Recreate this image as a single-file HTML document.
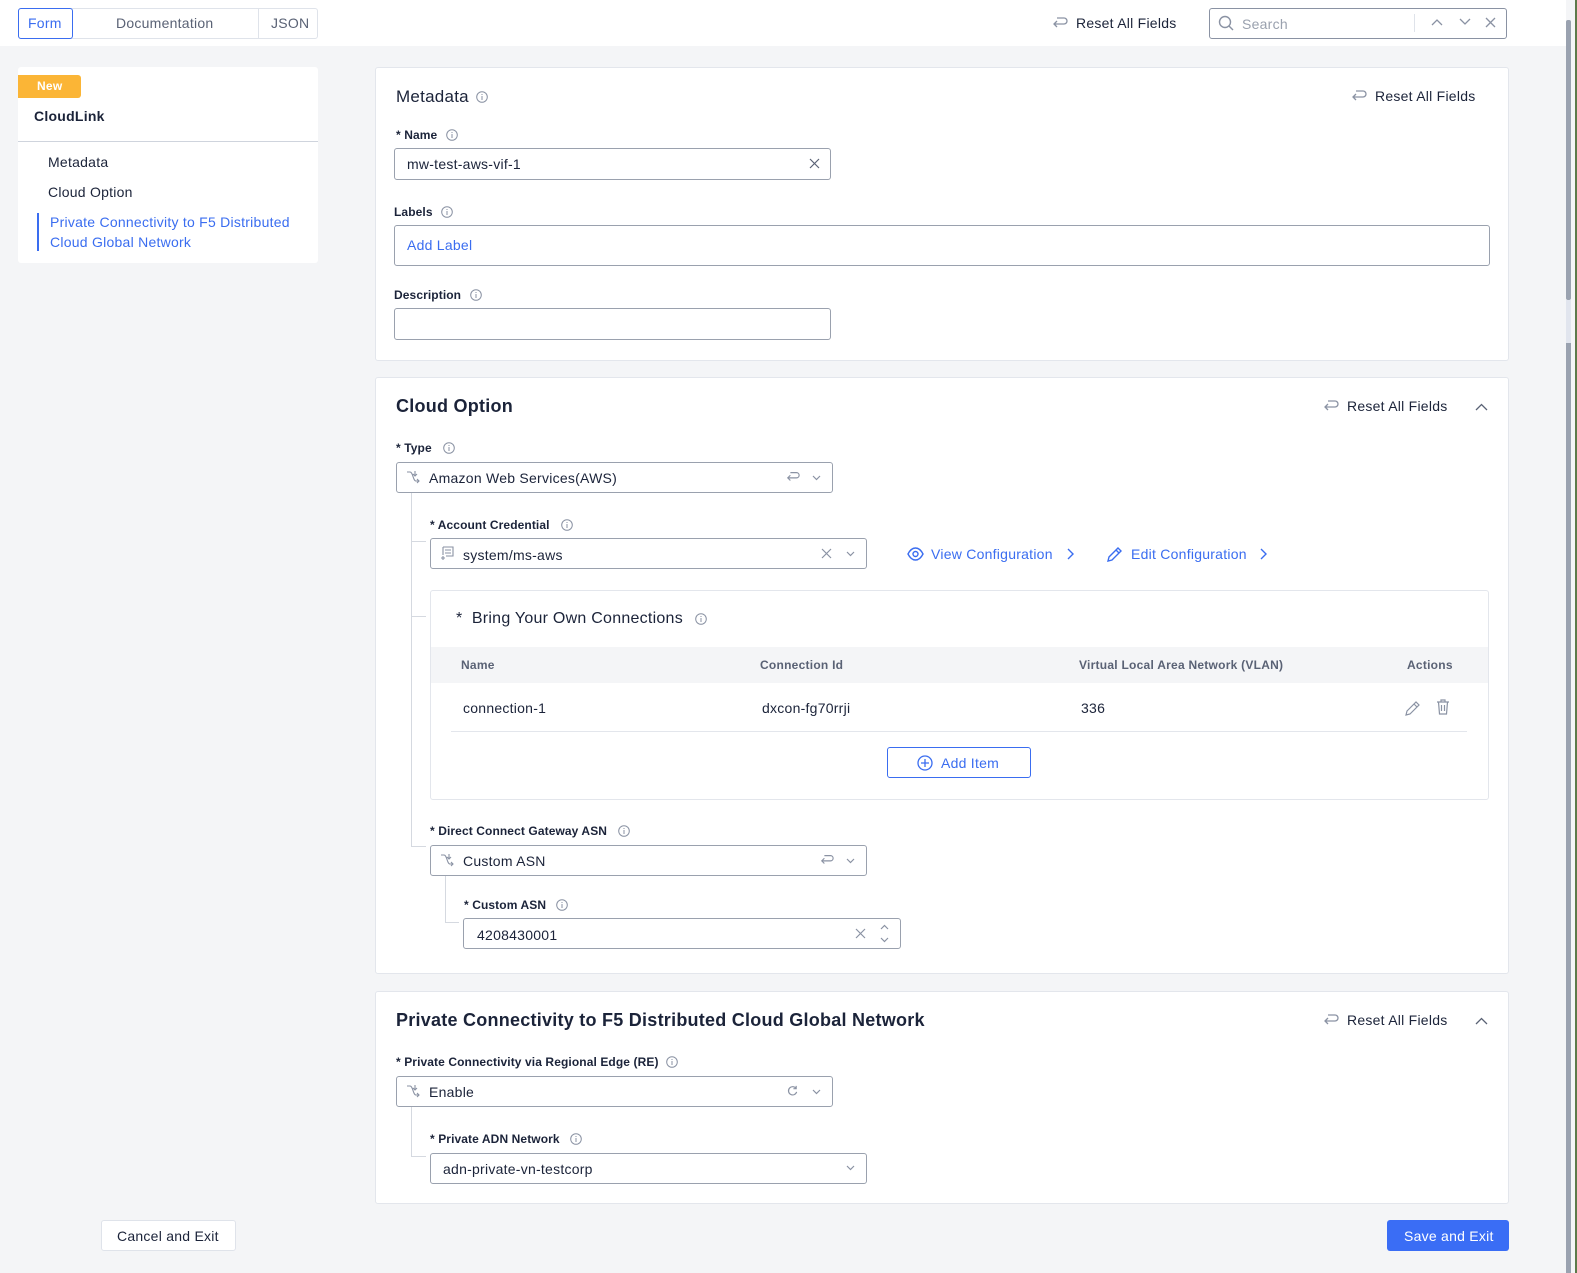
<!DOCTYPE html>
<html><head><meta charset="utf-8"><style>
*{box-sizing:border-box;margin:0;padding:0}
html{width:1577px;height:1273px;overflow:hidden}
body{width:1577px;height:1273px;position:relative;background:#f4f5f7;font-family:"Liberation Sans",sans-serif;color:#1b2339;font-size:14px;overflow:hidden;letter-spacing:0.25px}
.a{position:absolute}
.t{position:absolute;line-height:20px;white-space:nowrap}
.card{position:absolute;background:#fff;border:1px solid #e3e6ec;border-radius:3px}
.inp{position:absolute;background:#fff;border:1px solid #9aa1ae;border-radius:3px}
.lbl{position:absolute;line-height:20px;font-size:12px;font-weight:bold;color:#1b2339;white-space:nowrap;letter-spacing:0.1px}
.blue{color:#3a6df0}
.ln{position:absolute;background:#d5d9e0}
svg{position:absolute;overflow:visible}
</style></head><body>
<!-- top bar -->
<div class="a" style="left:0;top:0;width:1566px;height:46px;background:#fff"></div>
<div class="a" style="left:18px;top:8px;width:300px;height:31px;border:1px solid #dfe3ea;border-radius:3px"></div>
<div class="a" style="left:18px;top:8px;width:55px;height:31px;border:1px solid #3a6df0;border-radius:3px"></div>
<div class="a" style="left:258px;top:9px;width:1px;height:29px;background:#dfe3ea"></div>
<div class="t blue" style="left:28px;top:13px">Form</div>
<div class="t" style="left:116px;top:13px;color:#5a6275">Documentation</div>
<div class="t" style="left:271px;top:13px;color:#5a6275">JSON</div>
<svg style="left:1052px;top:15px" width="16" height="16" viewBox="0 0 16 16"><path d="M5 3h7a3 3 0 0 1 0 6H2M5 6 2 9l3 3" fill="none" stroke="#8a92a3" stroke-width="1.3"/></svg>
<div class="t" style="left:1076px;top:13px">Reset All Fields</div>
<div class="a" style="left:1209px;top:8px;width:298px;height:31px;border:1px solid #8a92a3;border-radius:3px;background:#fff"></div>
<svg style="left:1218px;top:15px" width="16" height="16"><circle cx="7" cy="7" r="5.5" fill="none" stroke="#8a92a3" stroke-width="1.4"/><path d="M11 11l4 4" stroke="#8a92a3" stroke-width="1.4"/></svg>
<div class="t" style="left:1242px;top:14px;color:#9aa1ae">Search</div>
<div class="a" style="left:1414px;top:14px;width:1px;height:18px;background:#dfe3ea"></div>
<svg style="left:1431px;top:18px" width="12" height="8"><path d="M1 7 6 2l5 5" fill="none" stroke="#8a92a3" stroke-width="1.3"/></svg>
<svg style="left:1459px;top:18px" width="12" height="8"><path d="M1 1l5 5 5-5" fill="none" stroke="#8a92a3" stroke-width="1.3"/></svg>
<svg style="left:1486px;top:18px" width="9" height="9"><path d="M0 0l9 9M9 0 0 9" stroke="#8a92a3" stroke-width="1.3"/></svg>
<!-- scrollbar -->
<div class="a" style="left:1566px;top:20px;width:5px;height:280px;background:#9aa2b0;border-radius:2px"></div>
<div class="a" style="left:1566px;top:300px;width:5px;height:43px;background:#e1e5ee"></div>
<div class="a" style="left:1566px;top:343px;width:5px;height:930px;background:#9aa2b0"></div>
<div class="a" style="left:1575px;top:0;width:2px;height:1273px;background:#5c7a4a"></div>
<!-- sidebar -->
<div class="a" style="left:18px;top:67px;width:300px;height:196px;background:#fff;border-radius:3px"></div>
<div class="a" style="left:18px;top:75px;width:63px;height:23px;background:#fbb536;border-radius:0 3px 3px 0"></div>
<div class="t" style="left:37px;top:77px;font-size:12px;font-weight:bold;color:#fff;line-height:18px">New</div>
<div class="t" style="left:34px;top:106px;font-weight:bold;font-size:14px">CloudLink</div>
<div class="a" style="left:18px;top:141px;width:300px;height:1px;background:#cfd4dd"></div>
<div class="t" style="left:48px;top:152px">Metadata</div>
<div class="t" style="left:48px;top:182px">Cloud Option</div>
<div class="a" style="left:37px;top:213px;width:2px;height:38px;background:#3a6df0"></div>
<div class="t blue" style="left:50px;top:212px">Private Connectivity to F5 Distributed</div>
<div class="t blue" style="left:50px;top:232px">Cloud Global Network</div>

<!-- card1 -->
<div class="card" style="left:375px;top:67px;width:1134px;height:294px"></div>
<div class="t" style="left:396px;top:87px;font-size:17px">Metadata</div>
<svg style="left:476px;top:91px" width="12" height="12"><circle cx="6" cy="6" r="5.3" fill="none" stroke="#8a92a3"/><path d="M6 5v4M6 3v1" stroke="#8a92a3"/></svg>
<svg style="left:1351px;top:88px" width="16" height="16" viewBox="0 0 16 16"><path d="M5 3h7a3 3 0 0 1 0 6H2M5 6 2 9l3 3" fill="none" stroke="#8a92a3" stroke-width="1.3"/></svg>
<div class="t" style="left:1375px;top:86px">Reset All Fields</div>
<div class="lbl" style="left:396px;top:125px">* Name</div>
<svg style="left:446px;top:129px" width="12" height="12"><circle cx="6" cy="6" r="5.3" fill="none" stroke="#8a92a3"/><path d="M6 5v4M6 3v1" stroke="#8a92a3"/></svg>
<div class="inp" style="left:394px;top:148px;width:437px;height:32px"></div>
<div class="t" style="left:407px;top:154px">mw-test-aws-vif-1</div>
<svg style="left:810px;top:159px" width="9" height="9"><path d="M0 0l9 9M9 0 0 9" stroke="#5a6275" stroke-width="1.2"/></svg>
<div class="lbl" style="left:394px;top:202px">Labels</div>
<svg style="left:441px;top:206px" width="12" height="12"><circle cx="6" cy="6" r="5.3" fill="none" stroke="#8a92a3"/><path d="M6 5v4M6 3v1" stroke="#8a92a3"/></svg>
<div class="inp" style="left:394px;top:225px;width:1096px;height:41px"></div>
<div class="t blue" style="left:407px;top:235px">Add Label</div>
<div class="lbl" style="left:394px;top:285px">Description</div>
<svg style="left:470px;top:289px" width="12" height="12"><circle cx="6" cy="6" r="5.3" fill="none" stroke="#8a92a3"/><path d="M6 5v4M6 3v1" stroke="#8a92a3"/></svg>
<div class="inp" style="left:394px;top:308px;width:437px;height:32px"></div>

<!-- card2 -->
<div class="card" style="left:375px;top:377px;width:1134px;height:597px"></div>
<div class="t" style="left:396px;top:395px;font-size:18px;font-weight:bold;line-height:22px">Cloud Option</div>
<svg style="left:1323px;top:398px" width="16" height="16" viewBox="0 0 16 16"><path d="M5 3h7a3 3 0 0 1 0 6H2M5 6 2 9l3 3" fill="none" stroke="#8a92a3" stroke-width="1.3"/></svg>
<div class="t" style="left:1347px;top:396px">Reset All Fields</div>
<svg style="left:1475px;top:403px" width="13" height="8"><path d="M1 7 6.5 1.5 12 7" fill="none" stroke="#5a6275" stroke-width="1.3"/></svg>
<div class="lbl" style="left:396px;top:438px">* Type</div>
<svg style="left:443px;top:442px" width="12" height="12"><circle cx="6" cy="6" r="5.3" fill="none" stroke="#8a92a3"/><path d="M6 5v4M6 3v1" stroke="#8a92a3"/></svg>
<div class="inp" style="left:396px;top:462px;width:437px;height:31px"></div>
<svg style="left:406px;top:470px" width="14" height="14" viewBox="0 0 14 14"><path d="M1 2h3c3 0 3 9 6 9h3M9 1v5M7 4l2 2 2-2M11 9l2 2-2 2" fill="none" stroke="#8a92a3" stroke-width="1.1"/></svg>
<div class="t" style="left:429px;top:468px">Amazon Web Services(AWS)</div>
<svg style="left:786px;top:470px" width="14" height="14" viewBox="0 0 16 16"><path d="M5 3h7a3 3 0 0 1 0 6H2M5 6 2 9l3 3" fill="none" stroke="#8a92a3" stroke-width="1.3"/></svg>
<svg style="left:812px;top:475px" width="9" height="6"><path d="M1 1l3.5 3.5L8 1" fill="none" stroke="#8a92a3" stroke-width="1.2"/></svg>
<div class="ln" style="left:411px;top:493px;width:1px;height:354px"></div>
<div class="ln" style="left:411px;top:541px;width:15px;height:1px"></div>
<div class="ln" style="left:411px;top:616px;width:15px;height:1px"></div>
<div class="ln" style="left:411px;top:846px;width:15px;height:1px"></div>
<div class="lbl" style="left:430px;top:515px">* Account Credential</div>
<svg style="left:561px;top:519px" width="12" height="12"><circle cx="6" cy="6" r="5.3" fill="none" stroke="#8a92a3"/><path d="M6 5v4M6 3v1" stroke="#8a92a3"/></svg>
<div class="inp" style="left:430px;top:538px;width:437px;height:31px"></div>
<svg style="left:440px;top:546px" width="15" height="15" viewBox="0 0 15 15"><path d="M3 1h10v9H6M5 4h6M5 7h6M3 1v8M1 12h4M3 10v4" fill="none" stroke="#8a92a3" stroke-width="1.1"/></svg>
<div class="t" style="left:463px;top:545px">system/ms-aws</div>
<svg style="left:822px;top:549px" width="9" height="9"><path d="M0 0l9 9M9 0 0 9" stroke="#8a92a3" stroke-width="1.2"/></svg>
<svg style="left:846px;top:551px" width="9" height="6"><path d="M1 1l3.5 3.5L8 1" fill="none" stroke="#8a92a3" stroke-width="1.2"/></svg>
<svg style="left:907px;top:547px" width="17" height="14" viewBox="0 0 17 14"><path d="M1 7c2-4 5-6 7.5-6S14 3 16 7c-2 4-5 6-7.5 6S3 11 1 7z" fill="none" stroke="#3a6df0" stroke-width="1.4"/><circle cx="8.5" cy="7" r="2.5" fill="none" stroke="#3a6df0" stroke-width="1.4"/></svg>
<div class="t blue" style="left:931px;top:544px">View Configuration</div>
<svg style="left:1067px;top:548px" width="7" height="12"><path d="M1 1l5 5-5 5" fill="none" stroke="#3a6df0" stroke-width="1.4"/></svg>
<svg style="left:1107px;top:546px" width="16" height="16" viewBox="0 0 16 16"><path d="M1 15l1-4L11 2l3 3-9 9zM9 4l3 3" fill="none" stroke="#3a6df0" stroke-width="1.4"/></svg>
<div class="t blue" style="left:1131px;top:544px">Edit Configuration</div>
<svg style="left:1260px;top:548px" width="7" height="12"><path d="M1 1l5 5-5 5" fill="none" stroke="#3a6df0" stroke-width="1.4"/></svg>
<!-- BYOC -->
<div class="a" style="left:430px;top:590px;width:1059px;height:210px;border:1px solid #e3e6ec;border-radius:3px"></div>
<div class="t" style="left:456px;top:608px;font-size:16px;line-height:22px">* &nbsp;Bring Your Own Connections</div>
<svg style="left:695px;top:613px" width="12" height="12"><circle cx="6" cy="6" r="5.3" fill="none" stroke="#8a92a3"/><path d="M6 5v4M6 3v1" stroke="#8a92a3"/></svg>
<div class="a" style="left:431px;top:647px;width:1057px;height:36px;background:#f4f5f7"></div>
<div class="t" style="left:461px;top:655px;font-size:12px;font-weight:bold;color:#5a6275">Name</div>
<div class="t" style="left:760px;top:655px;font-size:12px;font-weight:bold;color:#5a6275">Connection Id</div>
<div class="t" style="left:1079px;top:655px;font-size:12px;font-weight:bold;color:#5a6275">Virtual Local Area Network (VLAN)</div>
<div class="t" style="left:1407px;top:655px;font-size:12px;font-weight:bold;color:#5a6275">Actions</div>
<div class="t" style="left:463px;top:698px">connection-1</div>
<div class="t" style="left:762px;top:698px">dxcon-fg70rrji</div>
<div class="t" style="left:1081px;top:698px">336</div>
<svg style="left:1405px;top:700px" width="16" height="16" viewBox="0 0 16 16"><path d="M1 15l1-4L11 2l3 3-9 9zM9 4l3 3" fill="none" stroke="#8a92a3" stroke-width="1.2"/></svg>
<svg style="left:1436px;top:699px" width="14" height="16" viewBox="0 0 14 16"><path d="M1 3h12M5 3V1h4v2M2.5 3l1 12h7l1-12M5.5 6v6M8.5 6v6" fill="none" stroke="#8a92a3" stroke-width="1.2"/></svg>
<div class="a" style="left:451px;top:731px;width:1016px;height:1px;background:#e3e6ec"></div>
<div class="a" style="left:887px;top:747px;width:144px;height:31px;border:1px solid #3a6df0;border-radius:3px"></div>
<svg style="left:917px;top:755px" width="16" height="16"><circle cx="8" cy="8" r="7" fill="none" stroke="#3a6df0" stroke-width="1.3"/><path d="M8 4v8M4 8h8" stroke="#3a6df0" stroke-width="1.3"/></svg>
<div class="t blue" style="left:941px;top:753px">Add Item</div>
<div class="lbl" style="left:430px;top:821px">* Direct Connect Gateway ASN</div>
<svg style="left:618px;top:825px" width="12" height="12"><circle cx="6" cy="6" r="5.3" fill="none" stroke="#8a92a3"/><path d="M6 5v4M6 3v1" stroke="#8a92a3"/></svg>
<div class="inp" style="left:430px;top:845px;width:437px;height:31px"></div>
<svg style="left:440px;top:853px" width="14" height="14" viewBox="0 0 14 14"><path d="M1 2h3c3 0 3 9 6 9h3M9 1v5M7 4l2 2 2-2M11 9l2 2-2 2" fill="none" stroke="#8a92a3" stroke-width="1.1"/></svg>
<div class="t" style="left:463px;top:851px">Custom ASN</div>
<svg style="left:820px;top:853px" width="14" height="14" viewBox="0 0 16 16"><path d="M5 3h7a3 3 0 0 1 0 6H2M5 6 2 9l3 3" fill="none" stroke="#8a92a3" stroke-width="1.3"/></svg>
<svg style="left:846px;top:858px" width="9" height="6"><path d="M1 1l3.5 3.5L8 1" fill="none" stroke="#8a92a3" stroke-width="1.2"/></svg>
<div class="ln" style="left:445px;top:876px;width:1px;height:47px"></div>
<div class="ln" style="left:445px;top:922px;width:14px;height:1px"></div>
<div class="lbl" style="left:464px;top:895px">* Custom ASN</div>
<svg style="left:556px;top:899px" width="12" height="12"><circle cx="6" cy="6" r="5.3" fill="none" stroke="#8a92a3"/><path d="M6 5v4M6 3v1" stroke="#8a92a3"/></svg>
<div class="inp" style="left:463px;top:918px;width:438px;height:31px"></div>
<div class="t" style="left:477px;top:925px">4208430001</div>
<svg style="left:856px;top:929px" width="9" height="9"><path d="M0 0l9 9M9 0 0 9" stroke="#8a92a3" stroke-width="1.2"/></svg>
<svg style="left:880px;top:924px" width="9" height="20"><path d="M1 5l3.5-3.5L8 5M1 14l3.5 3.5L8 14" fill="none" stroke="#8a92a3" stroke-width="1.2"/></svg>

<!-- card3 -->
<div class="card" style="left:375px;top:991px;width:1134px;height:213px"></div>
<div class="t" style="left:396px;top:1009px;font-size:18px;font-weight:bold;line-height:22px">Private Connectivity to F5 Distributed Cloud Global Network</div>
<svg style="left:1323px;top:1012px" width="16" height="16" viewBox="0 0 16 16"><path d="M5 3h7a3 3 0 0 1 0 6H2M5 6 2 9l3 3" fill="none" stroke="#8a92a3" stroke-width="1.3"/></svg>
<div class="t" style="left:1347px;top:1010px">Reset All Fields</div>
<svg style="left:1475px;top:1017px" width="13" height="8"><path d="M1 7 6.5 1.5 12 7" fill="none" stroke="#5a6275" stroke-width="1.3"/></svg>
<div class="lbl" style="left:396px;top:1052px">* Private Connectivity via Regional Edge (RE)</div>
<svg style="left:666px;top:1056px" width="12" height="12"><circle cx="6" cy="6" r="5.3" fill="none" stroke="#8a92a3"/><path d="M6 5v4M6 3v1" stroke="#8a92a3"/></svg>
<div class="inp" style="left:396px;top:1076px;width:437px;height:31px"></div>
<svg style="left:406px;top:1084px" width="14" height="14" viewBox="0 0 14 14"><path d="M1 2h3c3 0 3 9 6 9h3M9 1v5M7 4l2 2 2-2M11 9l2 2-2 2" fill="none" stroke="#8a92a3" stroke-width="1.1"/></svg>
<div class="t" style="left:429px;top:1082px">Enable</div>
<svg style="left:787px;top:1085px" width="11" height="11" viewBox="0 0 12 12"><path d="M10 4A4.5 4.5 0 1 0 10.5 7.5M10 1v3H7" fill="none" stroke="#8a92a3" stroke-width="1.3"/></svg>
<svg style="left:812px;top:1089px" width="9" height="6"><path d="M1 1l3.5 3.5L8 1" fill="none" stroke="#8a92a3" stroke-width="1.2"/></svg>
<div class="ln" style="left:411px;top:1107px;width:1px;height:50px"></div>
<div class="ln" style="left:411px;top:1156px;width:15px;height:1px"></div>
<div class="lbl" style="left:430px;top:1129px">* Private ADN Network</div>
<svg style="left:570px;top:1133px" width="12" height="12"><circle cx="6" cy="6" r="5.3" fill="none" stroke="#8a92a3"/><path d="M6 5v4M6 3v1" stroke="#8a92a3"/></svg>
<div class="inp" style="left:430px;top:1153px;width:437px;height:31px"></div>
<div class="t" style="left:443px;top:1159px">adn-private-vn-testcorp</div>
<svg style="left:846px;top:1165px" width="9" height="6"><path d="M1 1l3.5 3.5L8 1" fill="none" stroke="#8a92a3" stroke-width="1.2"/></svg>

<!-- bottom -->
<div class="a" style="left:101px;top:1220px;width:135px;height:31px;background:#fff;border:1px solid #dfe3ea;border-radius:3px"></div>
<div class="t" style="left:117px;top:1226px">Cancel and Exit</div>
<div class="a" style="left:1387px;top:1220px;width:122px;height:31px;background:#3a6df5;border-radius:3px"></div>
<div class="t" style="left:1404px;top:1226px;color:#fff">Save and Exit</div>
</body></html>
